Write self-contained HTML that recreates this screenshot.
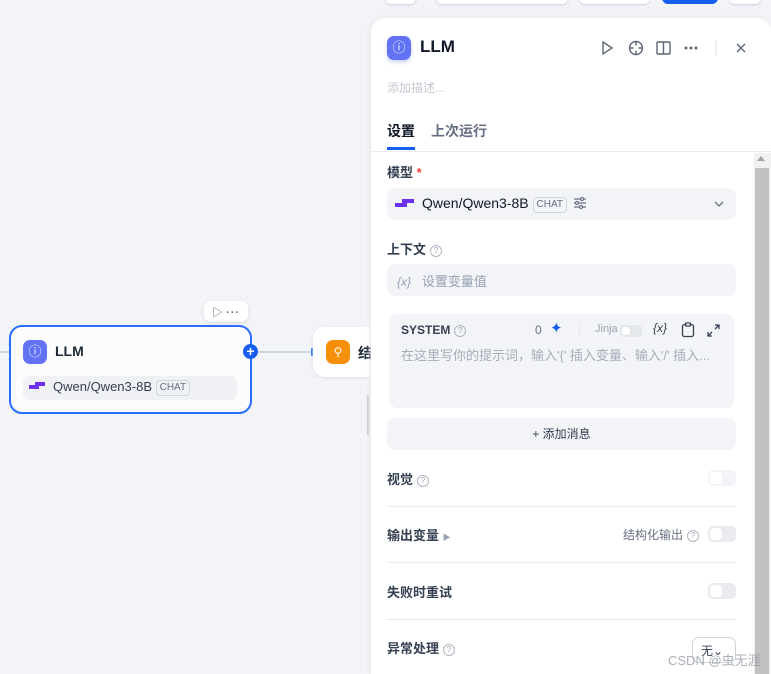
<!DOCTYPE html>
<html style="overflow:hidden;width:771px;height:674px"><head><meta charset="utf-8"><style>
*{box-sizing:border-box;margin:0;padding:0}
body{width:771px;height:674px;overflow:hidden;position:relative;font-family:"Liberation Sans","Noto Sans CJK SC",sans-serif;background-color:#f2f4f7;background-image:radial-gradient(#dfe2e8 1px,transparent 1.2px);background-size:16px 16px;color:#1d2939}
.a{position:absolute}
.t{font-size:13px;font-weight:700;color:#354052}
.q{display:inline-block;width:12px;height:12px;border:1px solid #b0b5bf;border-radius:50%;font-size:8px;line-height:10px;text-align:center;color:#98a2b3;font-weight:400;vertical-align:1px;margin-left:4px}
.tg{position:absolute;width:28px;height:16px;border-radius:5px;background:#e9ebf0}
.tg:after{content:"";position:absolute;left:2px;top:2px;width:12px;height:12px;border-radius:4px;background:#fff}
.hr{position:absolute;left:387px;width:349px;height:1px;background:#eaecf0}
.chat{display:inline-block;border:1px solid #d0d5dd;border-radius:4px;font-size:10px;color:#676f83;padding:0 3px;line-height:14px;vertical-align:1px}
</style></head><body>
<div class="a" style="left:385px;top:-10px;width:31px;height:14px;background:#fff;border-radius:6px;box-shadow:0 1px 2px #ccd"></div>
<div class="a" style="left:436px;top:-10px;width:132px;height:14px;background:#fff;border-radius:6px;box-shadow:0 1px 2px #ccd"></div>
<div class="a" style="left:579px;top:-10px;width:71px;height:14px;background:#fff;border-radius:6px;box-shadow:0 1px 2px #ccd"></div>
<div class="a" style="left:662px;top:-10px;width:56px;height:14px;background:#155eef;border-radius:6px"></div>
<div class="a" style="left:729px;top:-10px;width:32px;height:14px;background:#fff;border-radius:6px;box-shadow:0 1px 2px #ccd"></div>

<div class="a" style="left:0;top:351px;width:10px;height:2px;background:#d0d5dd"></div>
<div class="a" style="left:258px;top:351px;width:56px;height:2px;background:#d0d5dd"></div>
<div class="a" style="left:204px;top:301px;width:44px;height:21px;background:#fff;border-radius:7px;box-shadow:0 1px 3px #d5d8de;font-size:11px;color:#667085;padding:3px 0 0 8px">▷ <b style="letter-spacing:1px">···</b></div>
<div class="a" style="left:9px;top:325px;width:243px;height:89px;background:#fcfcfd;border:2px solid #296dff;border-radius:13px">
 <div class="a" style="left:12px;top:13px;width:24px;height:24px;border-radius:7px;background:#6172f3;color:#fff;font-size:13px;text-align:center;line-height:24px">ⓘ</div>
 <div class="a" style="left:44px;top:16px;font-size:14px;font-weight:700">LLM</div>
 <div class="a" style="left:12px;top:49px;width:214px;height:24px;border-radius:6px;background:#eff1f5;font-size:13px;color:#354052;padding:3px 0 0 30px">Qwen/Qwen3-8B <span class="chat">CHAT</span>
  <div class="a" style="left:6px;top:9px;width:10px;height:4px;background:#6a32f0"></div><div class="a" style="left:12px;top:6px;width:10px;height:4px;background:#6a32f0"></div></div>
</div>
<div class="a" style="left:243px;top:344px;width:15px;height:15px;border-radius:50%;background:#155eef;color:#fff;font-size:14px;font-weight:700;text-align:center;line-height:15px">+</div>
<div class="a" style="left:311px;top:348px;width:3px;height:8px;background:#296dff"></div>
<div class="a" style="left:313px;top:327px;width:70px;height:50px;background:#fff;border-radius:12px;box-shadow:0 1px 3px #dde"></div>
<div class="a" style="left:326px;top:340px;width:24px;height:24px;border-radius:7px;background:#f79009;color:#fff;font-size:12px;text-align:center;line-height:24px">⚲</div>
<div class="a" style="left:358px;top:343px;font-size:14px;font-weight:700">结</div>
<div class="a" style="left:367px;top:395px;width:2px;height:40px;background:#c8ccd3"></div>

<div class="a" style="left:371px;top:18px;width:400px;height:656px;background:#fff;border-radius:14px 14px 0 0;box-shadow:-1px 0 4px #e4e6eb"></div>
<div class="a" style="left:387px;top:36px;width:24px;height:24px;border-radius:7px;background:#6172f3;color:#fff;font-size:13px;text-align:center;line-height:24px;box-shadow:0 2px 4px #c9cdf8">ⓘ</div>
<div class="a" style="left:420px;top:37px;font-size:17px;font-weight:700;color:#101828">LLM</div>
<svg class="a" style="left:598px;top:38px" width="150" height="20" fill="none" stroke="#5d6675" stroke-width="1.4">
 <path d="M5 4l9 6-9 6z"/>
 <circle cx="38" cy="10" r="6.5"/><path d="M38 3.5v4M38 12.5v4M31.5 10h4M40.5 10h4"/>
 <rect x="59" y="4" width="13" height="12" rx="1"/><path d="M65.5 4v12"/>
 <circle cx="88" cy="10" r=".8" fill="#5d6675"/><circle cx="93" cy="10" r=".8" fill="#5d6675"/><circle cx="98" cy="10" r=".8" fill="#5d6675"/>
 <path d="M118 3v14" stroke="#e4e7ec"/>
 <path d="M139 6l8 8M147 6l-8 8"/>
</svg>
<div class="a" style="left:387px;top:79px;font-size:12px;color:#c4c8d0">添加描述...</div>
<div class="a" style="left:387px;top:121px;font-size:14px;font-weight:700;color:#101828">设置</div>
<div class="a" style="left:431px;top:121px;font-size:14px;font-weight:700;color:#676f83">上次运行</div>
<div class="a" style="left:387px;top:147px;width:28px;height:3px;background:#155eef"></div>
<div class="a" style="left:371px;top:151px;width:400px;height:1px;background:#eaecf0"></div>
<div class="a" style="left:754px;top:153px;width:17px;height:521px;background:#f1f1f1"></div>
<div class="a" style="left:755px;top:168px;width:14px;height:506px;background:#c1c1c1"></div>
<div class="a" style="left:757px;top:156px;width:0;height:0;border:4px solid transparent;border-bottom:5px solid #a3a3a3;border-top:0"></div>

<div class="a t" style="left:387px;top:162px">模型 <span style="color:#f04438">*</span></div>
<div class="a" style="left:387px;top:188px;width:349px;height:32px;background:#f2f4f7;border-radius:8px;font-size:14px;color:#101828;padding:7px 0 0 35px">Qwen/Qwen3-8B <span class="chat">CHAT</span>
 <div class="a" style="left:8px;top:15px;width:12px;height:4px;background:#6a32f0"></div><div class="a" style="left:15px;top:11px;width:12px;height:4px;background:#6a32f0"></div>
 <svg class="a" style="left:186px;top:8px" width="14" height="14" stroke="#676f83" stroke-width="1.2"><path d="M1 3h12M1 7h12M1 11h12"/><circle cx="9" cy="3" r="1.5" fill="#fff"/><circle cx="4" cy="7" r="1.5" fill="#fff"/><circle cx="8" cy="11" r="1.5" fill="#fff"/></svg>
 <svg class="a" style="left:327px;top:12px" width="10" height="8" fill="none" stroke="#676f83" stroke-width="1.3"><path d="M1 2l4 4 4-4"/></svg>
</div>
<div class="a t" style="left:387px;top:239px">上下文<span class="q">?</span></div>
<div class="a" style="left:387px;top:264px;width:349px;height:32px;background:#f2f4f7;border-radius:8px;font-size:13px;color:#98a2b3;padding:7px 0 0 10px"><span style="font-size:12px;font-style:italic">{x}</span>&nbsp;&nbsp; 设置变量值</div>

<div class="a" style="left:389px;top:314px;width:345px;height:94px;background:#f2f4f7;border-radius:8px">
 <div class="a" style="left:12px;top:9px;font-size:12px;font-weight:700;color:#354052">SYSTEM<span class="q">?</span></div>
 <div class="a" style="left:146px;top:9px;font-size:12px;color:#676f83">0</div>
 <div class="a" style="left:161px;top:5px;font-size:15px;color:#155eef">✦</div>
 <div class="a" style="left:190px;top:9px;width:1px;height:14px;background:#e4e7ec"></div>
 <div class="a" style="left:206px;top:9px;font-size:11px;color:#98a2b3">Jinja</div>
 <div class="a" style="left:231px;top:11px;width:22px;height:12px;border-radius:4px;background:#e4e7ec"><div class="a" style="left:2px;top:2px;width:8px;height:8px;border-radius:3px;background:#fff"></div></div>
 <div class="a" style="left:264px;top:7px;font-size:12px;color:#354052;font-style:italic">{x}</div>
 <svg class="a" style="left:292px;top:8px" width="14" height="16" fill="none" stroke="#354052" stroke-width="1.3"><rect x="1.5" y="2.5" width="11" height="12" rx="2"/><rect x="4.5" y="1" width="5" height="3" rx="1" fill="#f2f4f7"/></svg>
 <svg class="a" style="left:318px;top:10px" width="13" height="13" fill="none" stroke="#354052" stroke-width="1.3"><path d="M8 1h4v4M12 1L8 5M5 12H1V8M1 12l4-4"/></svg>
 <div class="a" style="left:12px;top:31px;font-size:13px;color:#a6adb9;white-space:nowrap">在这里写你的提示词，输入'{' 插入变量、输入'/' 插入...</div>
</div>
<div class="a" style="left:387px;top:418px;width:349px;height:32px;background:#f2f4f7;border-radius:8px;font-size:12px;color:#354052;text-align:center;line-height:32px">+ 添加消息</div>

<div class="a t" style="left:387px;top:469px">视觉<span class="q">?</span></div>
<div class="tg" style="left:708px;top:470px;background:#f2f4f7"></div>
<div class="hr" style="top:506px"></div>
<div class="a t" style="left:387px;top:525px">输出变量 <span style="font-size:8px;color:#98a2b3">▶</span></div>
<div class="a" style="left:623px;top:526px;font-size:12px;color:#676f83">结构化输出<span class="q">?</span></div>
<div class="tg" style="left:708px;top:526px"></div>
<div class="hr" style="top:562px"></div>
<div class="a t" style="left:387px;top:582px">失败时重试</div>
<div class="tg" style="left:708px;top:583px"></div>
<div class="hr" style="top:619px"></div>
<div class="a t" style="left:387px;top:638px">异常处理<span class="q">?</span></div>
<div class="a" style="left:692px;top:637px;width:44px;height:26px;border:1px solid #d0d5dd;border-radius:7px;background:#fff;font-size:12px;color:#354052;padding:4px 0 0 8px">无⌄</div>
<div class="a" style="left:668px;top:650px;font-size:13px;color:rgba(150,155,165,.8)">CSDN @虫无涯</div>
</body></html>
